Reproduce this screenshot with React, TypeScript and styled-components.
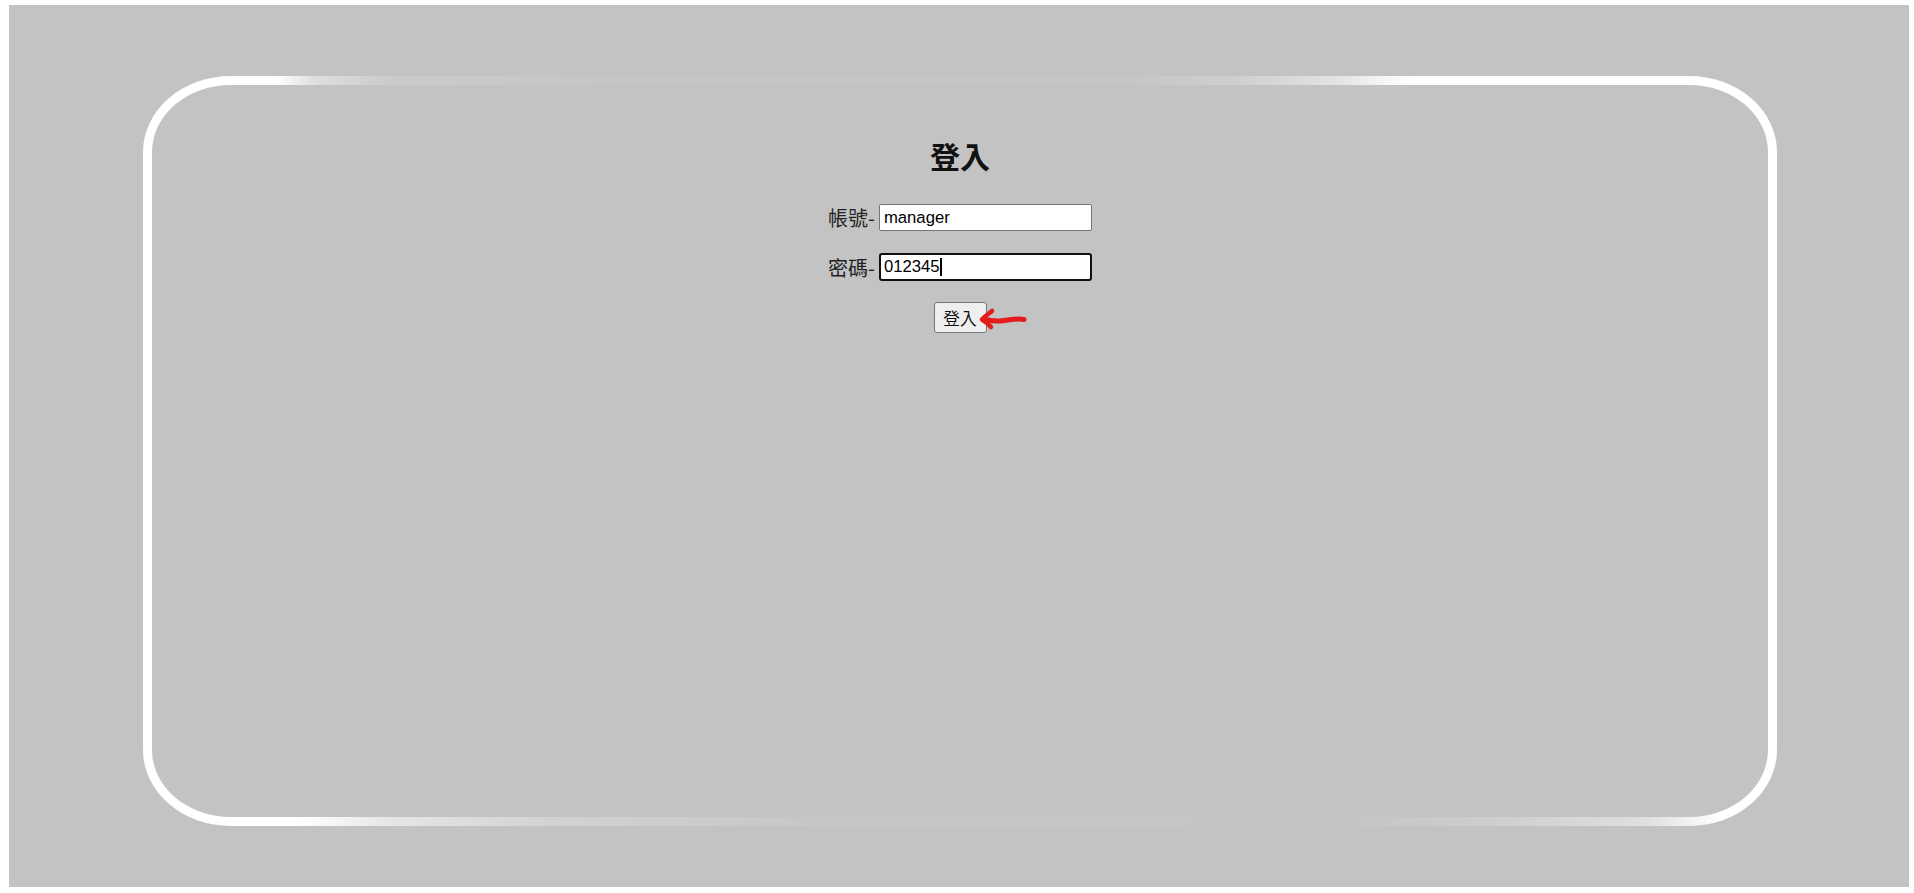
import React from "react";
import styled, { createGlobalStyle } from "styled-components";

const GlobalStyle = createGlobalStyle`
    html, body {
        margin: 0;
        padding: 0;
        background: #ffffff;
    }
    body {
        font-family: "Liberation Sans", Arial, "Noto Sans CJK TC", sans-serif;
    }
`;

const GRAY = "#c3c3c3";

const Page = styled.div`
    width: 1914px;
    height: 893px;
    box-sizing: border-box;
    padding: 5px 5px 6px 9px;
    background: #ffffff;
`;

const Stage = styled.div`
    height: 100%;
    box-sizing: border-box;
    padding: 71px 132px 61px 134px;
    background: ${GRAY};
`;

// white frame whose top and bottom edges fade into the background
const Card = styled.div`
    position: relative;
    height: 100%;
    box-sizing: border-box;
    border: 9px solid transparent;
    border-radius: 88px / 76px;
    background:
        linear-gradient(${GRAY}, ${GRAY}) padding-box,
        linear-gradient(
                90deg,
                #ffffff 0%,
                #ffffff 8.2%,
                #dedede 10.6%,
                #cbcbcb 15%,
                #c6c6c6 28%,
                #c5c5c5 60%,
                #cfcfcf 67%,
                #e4e4e4 73.4%,
                #ffffff 77.5%,
                #ffffff 100%
            )
            top / 100% 50% no-repeat border-box,
        linear-gradient(
                90deg,
                #ffffff 0%,
                #ffffff 9.5%,
                #e6e6e6 15%,
                #d2d2d2 25%,
                #c6c6c6 42%,
                #c5c5c5 74%,
                #cdcdcd 82%,
                #dfdfdf 92%,
                #ffffff 96.5%,
                #ffffff 100%
            )
            bottom / 100% 50% no-repeat border-box;
    display: flex;
    flex-direction: column;
    align-items: center;
    padding-top: 52px;
`;

const Title = styled.h2`
    margin: 0 0 31px;
    font-family: "Noto Sans CJK TC", "Liberation Sans", sans-serif;
    font-size: 30px;
    font-weight: 700;
    line-height: 36px;
    color: #111111;
`;

const Row = styled.div<{ gap?: number }>`
    display: flex;
    align-items: center;
    gap: 4px;
    margin-bottom: ${({ gap = 0 }) => gap}px;
`;

const Label = styled.label`
    font-family: "Noto Sans CJK TC", "Liberation Sans", sans-serif;
    font-size: 20px;
    line-height: 27px;
    color: #222222;
`;

const TextInput = styled.input`
    width: 213px;
    height: 27px;
    box-sizing: border-box;
    margin: 0;
    padding: 1px 4px;
    border: 1px solid #767676;
    border-radius: 2px;
    background: #ffffff;
    font-family: "Liberation Sans", Arial, sans-serif;
    font-size: 16.67px;
    color: #000000;
    outline: none;
`;

// the focused field, drawn with its caret
const FocusedField = styled.div`
    width: 213px;
    height: 28px;
    box-sizing: border-box;
    padding: 0 3px;
    border: 2px solid #101010;
    border-radius: 3px;
    background: #ffffff;
    display: flex;
    align-items: center;
    font-family: "Liberation Sans", Arial, sans-serif;
    font-size: 16.67px;
    color: #000000;
`;

const Caret = styled.span`
    display: inline-block;
    width: 2px;
    height: 18px;
    background: #000000;
`;

const ButtonWrap = styled.div`
    position: relative;
`;

const SubmitButton = styled.button`
    width: 53px;
    height: 31px;
    box-sizing: border-box;
    padding: 0;
    border: 1px solid #767676;
    border-radius: 3px;
    background: #efefef;
    font-family: "Noto Sans CJK TC", "Liberation Sans", sans-serif;
    font-size: 16.67px;
    color: #111111;
`;

const Pointer = styled.svg`
    position: absolute;
    left: 44px;
    top: 4px;
`;

export default function App() {
    return (
        <>
            <GlobalStyle />
            <Page>
                <Stage>
                    <Card>
                        <Title>登入</Title>
                        <Row gap={22}>
                            <Label>帳號-</Label>
                            <TextInput type="text" value="manager" readOnly />
                        </Row>
                        <Row gap={21}>
                            <Label>密碼-</Label>
                            <FocusedField>
                                012345
                                <Caret />
                            </FocusedField>
                        </Row>
                        <ButtonWrap>
                            <SubmitButton type="button">登入</SubmitButton>
                            <Pointer width="50" height="26" viewBox="0 0 50 26">
                                <path
                                    d="M46 13.5 C38 12 30 14.5 22 15 C16 15.5 11 14.5 5 13"
                                    fill="none"
                                    stroke="#e41c1c"
                                    strokeWidth="5"
                                    strokeLinecap="round"
                                />
                                <path
                                    d="M14 5 C11 7.5 7 10 4 13.5 C8 16 11 18.5 13 21"
                                    fill="none"
                                    stroke="#e41c1c"
                                    strokeWidth="4.5"
                                    strokeLinecap="round"
                                    strokeLinejoin="round"
                                />
                            </Pointer>
                        </ButtonWrap>
                    </Card>
                </Stage>
            </Page>
        </>
    );
}
